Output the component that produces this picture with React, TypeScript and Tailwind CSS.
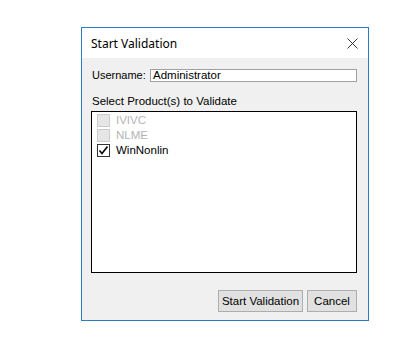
function CloseIcon() {
  return (
    <svg width="11" height="11" viewBox="0 0 11 11" className="block">
      <path d="M0.5 0.5 L10.5 10.5 M10.5 0.5 L0.5 10.5" stroke="#222" strokeWidth="0.9" fill="none" />
    </svg>
  );
}

function CheckItem({
  label,
  checked,
  disabled,
}: {
  label: string;
  checked?: boolean;
  disabled?: boolean;
}) {
  return (
    <div className="flex h-[15px] items-center gap-[6px]">
      {disabled ? (
        <div className="h-[13px] w-[13px] border border-[#cccccc] bg-[#e6e6e6]" />
      ) : (
        <div className="flex h-[13px] w-[13px] items-center justify-center border border-[#333333] bg-white">
          {checked && (
            <svg width="11" height="11" viewBox="0 0 11 11" className="block">
              <path d="M1.5 5.5 L4 8.5 L9.5 1.5" stroke="#000" strokeWidth="1.6" fill="none" />
            </svg>
          )}
        </div>
      )}
      <span className={disabled ? "text-[#b4b4b4]" : "text-black"}>{label}</span>
    </div>
  );
}

function WinButton({ children, width }: { children: string; width: string }) {
  return (
    <button
      className={`flex h-[22px] items-center justify-center border border-[#adadad] bg-[#e1e1e1] text-black ${width}`}
    >
      {children}
    </button>
  );
}

export default function App() {
  return (
    <div className="h-[351px] w-[401px] bg-white pl-[81px] pt-[27px]">
      <div className="flex h-[294px] w-[288px] flex-col border border-[#2b7bc4] font-['Liberation_Sans',Arial,sans-serif] text-[11.5px] leading-[13px]">
        <div className="flex h-[30px] items-center justify-between bg-white pl-[9px] pr-[10px]">
          <span className="mt-[1px] font-['Noto_Sans',sans-serif] text-[12px] text-black">Start Validation</span>
          <CloseIcon />
        </div>
        <div className="flex flex-1 flex-col bg-[#f0f0f0] pl-[9px] pr-[11px]">
          <div className="mt-[11px] flex h-[13px] items-center">
            <span className="ml-[1px] w-[58px] text-[11px]">Username:</span>
            <div className="flex h-[13px] flex-1 items-center border border-[#a0a0a0] bg-white pl-[2px]">
              Administrator
            </div>
          </div>
          <div className="ml-[1px] mt-[13px] h-[13px]">Select Product(s) to Validate</div>
          <div className="mt-[3px] flex h-[162px] flex-col border border-black bg-white pl-[5px] pt-[1px]">
            <CheckItem label="IVIVC" disabled />
            <CheckItem label="NLME" disabled />
            <CheckItem label="WinNonlin" checked />
          </div>
          <div className="mt-[17px] flex justify-end gap-[4px]">
            <WinButton width="w-[85px]">Start Validation</WinButton>
            <WinButton width="w-[50px]">Cancel</WinButton>
          </div>
        </div>
      </div>
    </div>
  );
}
